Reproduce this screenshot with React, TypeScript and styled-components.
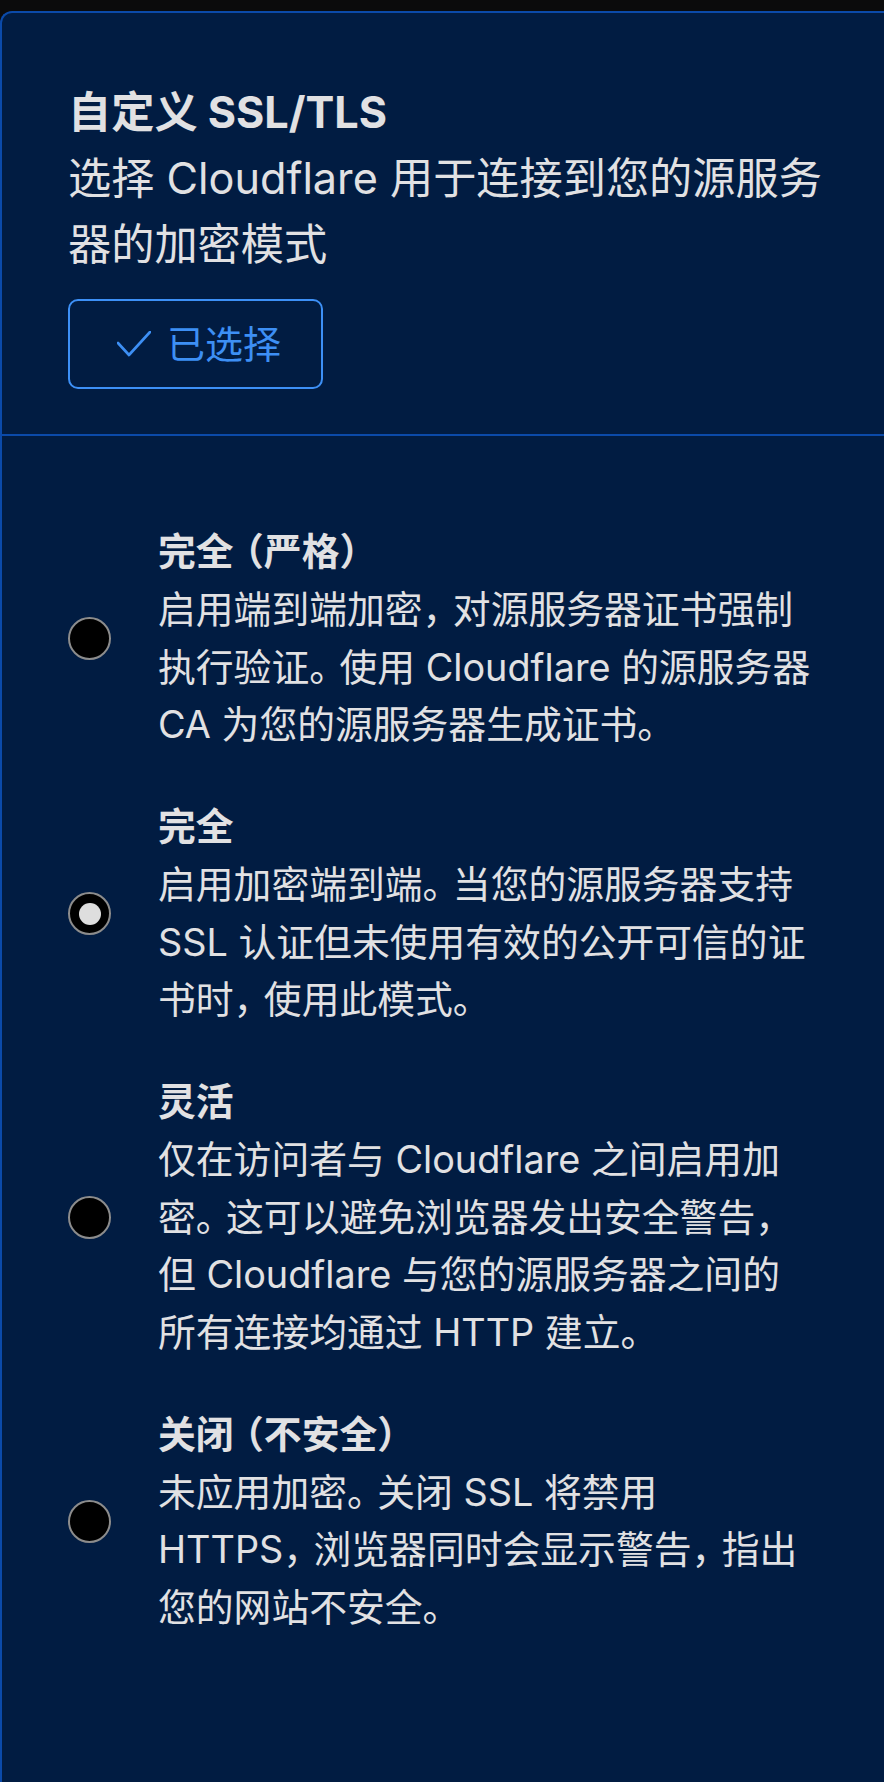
import React, { useState } from "react";
import styled, { createGlobalStyle } from "styled-components";

const GlobalStyle = createGlobalStyle`
  html, body {
    margin: 0;
    padding: 0;
    background: #0b0b0c;
    overflow: hidden;
  }
  body {
    font-family: "Inter", "Noto Sans CJK SC", sans-serif;
    -webkit-font-smoothing: antialiased;
  }
`;

const Page = styled.div`
  padding-top: 11px;
  min-height: 1771px;
`;

const Card = styled.section`
  min-height: 1771px;
  box-sizing: border-box;
  background: #011c42;
  border-top: 2px solid #0b4aa9;
  border-left: 2px solid #0b4aa9;
  border-top-left-radius: 12px;
  color: #e1e1e3;
`;

const Header = styled.header`
  padding: 66px 40px 45px 66px;
  border-bottom: 2px solid #0b4aa9;
`;

const Title = styled.h2`
  margin: 0;
  font-size: 43.2px;
  line-height: 66px;
  font-weight: 700;
`;

const Subtitle = styled.p`
  margin: 0;
  font-size: 43.2px;
  line-height: 66px;
  font-weight: 400;
`;

// text is laid out line by line, as in the source screen
const Line = styled.span`
  display: block;
  white-space: nowrap;
`;

// CJK punctuation: half-width glyph plus a little space, a bit tighter than a full em
const Punct = styled.span<{ $open?: boolean }>`
  font-feature-settings: "halt" 1;
  margin-left: ${(p) => (p.$open ? "0.3em" : "0")};
  margin-right: ${(p) => (p.$open ? "0" : "0.3em")};
`;

const SelectedButton = styled.button`
  margin-top: 22px;
  width: 255px;
  height: 90px;
  box-sizing: border-box;
  display: flex;
  align-items: center;
  gap: 16px;
  padding: 0 0 0 47px;
  background: transparent;
  border: 2.5px solid #3d90f6;
  border-radius: 10px;
  color: #3d8ff4;
  font-family: inherit;
  font-size: 38px;
  line-height: 1;
  cursor: pointer;
`;

const List = styled.div`
  display: flex;
  flex-direction: column;
  gap: 44px;
  padding: 87px 40px 0 66px;
`;

const Option = styled.label`
  display: flex;
  align-items: center;
  gap: 47px;
  cursor: pointer;
`;

const Radio = styled.span<{ $checked: boolean }>`
  flex-shrink: 0;
  width: 43px;
  height: 43px;
  box-sizing: border-box;
  border-radius: 50%;
  border: 2px solid #8c8c8c;
  background: #000;
  display: flex;
  align-items: center;
  justify-content: center;

  &::after {
    content: "";
    display: ${(p) => (p.$checked ? "block" : "none")};
    width: 22px;
    height: 22px;
    border-radius: 50%;
    background: #dedede;
  }
`;

const OptionText = styled.div`
  flex: 1;
  font-size: 37.8px;
  line-height: 57.75px;
`;

const OptionTitle = styled.div`
  font-weight: 700;
`;

const OptionDesc = styled.div`
  font-weight: 400;
`;

const CheckIcon = () => (
  <svg width="34" height="26" viewBox="0 0 34 26" fill="none">
    <polyline
      points="1,12 12,24 33,1"
      stroke="currentColor"
      strokeWidth="2.6"
      strokeLinecap="round"
      strokeLinejoin="round"
    />
  </svg>
);

const tight = (text: string) =>
  text.split(/([，。（）])/).map((part, i) =>
    /^[，。（）]$/.test(part) ? (
      <Punct key={i} $open={part === "（"}>
        {part}
      </Punct>
    ) : (
      part
    )
  );

const subtitle = ["选择 Cloudflare 用于连接到您的源服务", "器的加密模式"];

const modes = [
  {
    id: "strict",
    title: "完全（严格）",
    lines: [
      "启用端到端加密，对源服务器证书强制",
      "执行验证。使用 Cloudflare 的源服务器",
      "CA 为您的源服务器生成证书。",
    ],
  },
  {
    id: "full",
    title: "完全",
    lines: [
      "启用加密端到端。当您的源服务器支持",
      "SSL 认证但未使用有效的公开可信的证",
      "书时，使用此模式。",
    ],
  },
  {
    id: "flexible",
    title: "灵活",
    lines: [
      "仅在访问者与 Cloudflare 之间启用加",
      "密。这可以避免浏览器发出安全警告，",
      "但 Cloudflare 与您的源服务器之间的",
      "所有连接均通过 HTTP 建立。",
    ],
  },
  {
    id: "off",
    title: "关闭（不安全）",
    lines: [
      "未应用加密。关闭 SSL 将禁用",
      "HTTPS，浏览器同时会显示警告，指出",
      "您的网站不安全。",
    ],
  },
];

const App: React.FC = () => {
  const [mode, setMode] = useState("full");

  return (
    <Page>
      <GlobalStyle />
      <Card>
        <Header>
          <Title>自定义 SSL/TLS</Title>
          <Subtitle>
            {subtitle.map((l) => (
              <Line key={l}>{l}</Line>
            ))}
          </Subtitle>
          <SelectedButton type="button">
            <CheckIcon />
            已选择
          </SelectedButton>
        </Header>
        <List role="radiogroup">
          {modes.map((m) => (
            <Option key={m.id} onClick={() => setMode(m.id)}>
              <Radio $checked={mode === m.id} role="radio" aria-checked={mode === m.id} />
              <OptionText>
                <OptionTitle>{tight(m.title)}</OptionTitle>
                <OptionDesc>
                  {m.lines.map((l) => (
                    <Line key={l}>{tight(l)}</Line>
                  ))}
                </OptionDesc>
              </OptionText>
            </Option>
          ))}
        </List>
      </Card>
    </Page>
  );
};

export default App;
